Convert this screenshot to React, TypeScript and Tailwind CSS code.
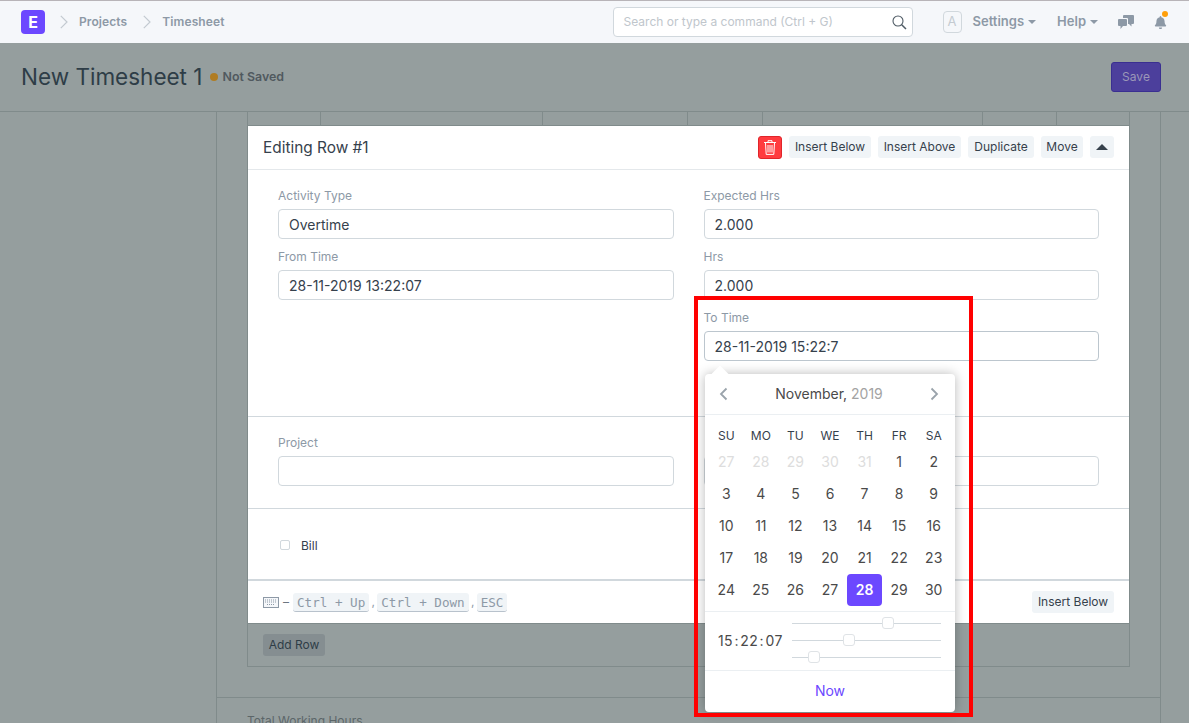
import { FaBell } from 'react-icons/fa';

const WEEK_DAYS = ['SU', 'MO', 'TU', 'WE', 'TH', 'FR', 'SA'];
const PREV_DAYS = [27, 28, 29, 30, 31];
const DAYS = Array.from({ length: 30 }, (_, i) => i + 1);

function Field({ label, value, focused }: { label?: string; value?: string; focused?: boolean }) {
  return (
    <div className="mb-[8px]">
      <div className="h-5 mb-[3px] text-xs leading-5 text-[#8d99a6]">{label}</div>
      <div className={`h-[30px] px-[10px] border rounded text-sm leading-[30px] text-[#36414c] bg-white ${focused ? 'border-[#bcc6ce]' : 'border-[#d1d8dd]'}`}>
        {value}
      </div>
    </div>
  );
}

function SmallBtn({ children, className = '' }: { children: React.ReactNode; className?: string }) {
  return (
    <div className={`h-[22px] flex items-center justify-center rounded-[3px] bg-[#f0f4f7] text-xs text-[#36414c] ${className}`}>
      {children}
    </div>
  );
}

function Crumb({ label }: { label: string }) {
  return (
    <div className="flex items-center gap-[11px]">
      <svg width="8" height="14" viewBox="0 0 8 14" fill="none" stroke="#c3cad1" strokeWidth="1.2">
        <path d="M0.8 0.8 L7 7 L0.8 13.2" />
      </svg>
      <span className="text-xs tracking-[0.1px] font-semibold text-[#8d99a6]">{label}</span>
    </div>
  );
}

function Caret({ color = '#8d99a6' }: { color?: string }) {
  return (
    <svg width="8" height="4" viewBox="0 0 8 4">
      <path d="M0 0 H8 L4 4 Z" fill={color} />
    </svg>
  );
}

function Kbd({ children }: { children: React.ReactNode }) {
  return (
    <span className="px-1 h-[19px] leading-[19px] rounded-[3px] bg-[#f0f4f7] border-b border-[#b8c2cc] text-[#8d99a6] text-[12.6px] font-['DejaVu_Sans_Mono',monospace]">
      {children}
    </span>
  );
}

function TimeSlider({ left }: { left: string }) {
  return (
    <div className="relative h-[17px] flex items-center">
      <div className="w-full h-px bg-[#d1d8dd]" />
      <div className={`absolute ${left} top-[2px] w-3 h-3 rounded-[3px] bg-white border border-[#dfe3e6]`} />
    </div>
  );
}

function DatePicker() {
  return (
    <div className="absolute left-[705px] top-[374px] w-[250px] h-[338px] bg-white rounded shadow-[0_0_12px_rgba(0,0,0,0.28)] flex flex-col">
      <div className="absolute -top-[6px] left-[9px] w-3 h-3 rotate-45 bg-white" />
      <div className="relative h-[41px] flex items-center justify-between pl-[14px] pr-[16px] border-b border-[#ebeff2]">
        <svg width="9" height="14" viewBox="0 0 9 14" fill="none" stroke="#9aa3ab" strokeWidth="1.8">
          <path d="M7.5 1.5 L2 7 L7.5 12.5" />
        </svg>
        <div className="text-sm text-[#4a4a4a]">
          November, <span className="text-[#a3a3a3]">2019</span>
        </div>
        <svg width="9" height="14" viewBox="0 0 9 14" fill="none" stroke="#9aa3ab" strokeWidth="1.8">
          <path d="M1.5 1.5 L7 7 L1.5 12.5" />
        </svg>
      </div>
      <div className="grid grid-cols-7 px-1 pt-[11px] text-center">
        {WEEK_DAYS.map((d) => (
          <div key={d} className="h-[18px] leading-[19px] text-xs text-[#36414c]">
            {d}
          </div>
        ))}
      </div>
      <div className="grid grid-cols-7 auto-rows-[32px] px-1 pt-[2px] text-center text-sm text-[#4a4a4a] leading-[32px]">
        {PREV_DAYS.map((d) => (
          <div key={`p${d}`} className="text-[#dddddd]">
            {d}
          </div>
        ))}
        {DAYS.map((d) =>
          d === 28 ? (
            <div key={d} className="rounded bg-[#6c48ff] text-white font-semibold">
              {d}
            </div>
          ) : (
            <div key={d}>{d}</div>
          )
        )}
      </div>
      <div className="mt-[5px] h-[60px] flex items-center border-y border-[#ebeff2] pl-[13px] pr-[14px]">
        <div className="w-[74px] text-sm tracking-[0.35px] text-[#4a4a4a]">
          15<span className="mx-[1.5px]">:</span>22<span className="mx-[1.5px]">:</span>07
        </div>
        <div className="flex-1 flex flex-col mb-[1px]">
          <TimeSlider left="left-[90px]" />
          <TimeSlider left="left-[51px]" />
          <TimeSlider left="left-[16px]" />
        </div>
      </div>
      <div className="flex-1 flex items-center justify-center text-sm text-[#6c48ff] pb-[1px]">Now</div>
    </div>
  );
}

export default function App() {
  return (
    <div className="relative h-[723px] overflow-hidden bg-[#959e9e] font-['Inter',sans-serif]">
      {/* navbar */}
      <div className="h-[43px] border-t border-[#b8b4b8] bg-[#f5f7fa] flex items-center pl-[21px] pr-[22px]">
        <div className="w-6 h-6 rounded bg-[#6c48ff] flex items-center justify-center text-white text-base font-bold">E</div>
        <div className="ml-[15px] flex items-center gap-4">
          <Crumb label="Projects" />
          <Crumb label="Timesheet" />
        </div>
        <div className="ml-auto w-[300px] h-[30px] pl-[10px] pr-[5px] flex items-center justify-between bg-white border border-[#d1d8dd] rounded text-xs text-[#c0c6cc]">
          <span>Search or type a command (Ctrl + G)</span>
          <svg width="15" height="15" viewBox="0 0 15 15" fill="none" stroke="#4f5b65" strokeWidth="1.1">
            <circle cx="6" cy="6" r="5" />
            <path d="M9.7 9.7 L14 14" strokeWidth="1.5" />
          </svg>
        </div>
        <div className="ml-[30px] w-[19px] h-[22px] rounded border border-[#d1d8dd] flex items-center justify-center text-[13px] text-[#c4cbd1]">A</div>
        <div className="ml-[11px] flex items-center gap-1 text-[13px] font-semibold text-[#8d99a6]">
          Settings <Caret />
        </div>
        <div className="ml-[21px] flex items-center gap-1 text-[13px] font-semibold text-[#8d99a6]">
          Help <Caret />
        </div>
        <svg className="ml-5" width="16" height="15" viewBox="0 0 16 15" fill="#8d99a6">
          <path d="M5 1 a1 1 0 0 1 1 -1 H15 a1 1 0 0 1 1 1 V8 a1 1 0 0 1 -1 1 H13.5 V11.5 L11 9 H10 V4 a1 1 0 0 0 -1 -1 H5 Z" />
          <path d="M1 4 H8 a1 1 0 0 1 1 1 V10 a1 1 0 0 1 -1 1 H5 L2.5 14 V11 H1 a1 1 0 0 1 -1 -1 V5 a1 1 0 0 1 1 -1 Z" />
        </svg>
        <div className="relative ml-5">
          <FaBell className="text-[#8d99a6] text-[13px]" />
          <div className="absolute -top-[5px] left-[8px] w-[6px] h-[6px] rounded-full bg-[#ff9f0a]" />
        </div>
      </div>

      {/* page head */}
      <div className="h-[69px] border-b border-[#808b8b] flex items-center pl-[21px] pr-[28px]">
        <h1 className="text-[22.5px] text-[#2e3d47] font-normal">New Timesheet 1</h1>
        <div className="ml-2 w-2 h-2 rounded-full bg-[#b07c22]" />
        <span className="ml-1 text-[12.4px] font-semibold text-[#50595f]">Not Saved</span>
        <div className="ml-auto w-[50px] h-[30px] flex items-center justify-center rounded-[3px] bg-[#4c3f9c] border border-[#3a2f91] text-xs text-[#9b97b8]">
          Save
        </div>
      </div>

      {/* form column */}
      <div className="ml-[216px] w-[945px] h-[611px] border-x border-[#808b8b] pl-[30px] pr-[30px]">
        <div className="border-x border-[#808b8b]">
          <div className="h-[14px] flex border-b border-[#808b8b]">
            <div className="w-[73px] border-r border-[#808b8b]" />
            <div className="w-[222px] border-r border-[#808b8b]" />
            <div className="w-[145px] border-r border-[#808b8b]" />
            <div className="w-[75px] border-r border-[#808b8b]" />
            <div className="w-[220px] border-r border-[#808b8b]" />
            <div className="w-[74px] border-r border-[#808b8b]" />
          </div>

          <div className="bg-white h-[497px] flex flex-col">
            <div className="h-[44px] flex items-center justify-between pl-[15px] pr-[15px] pb-[1px] border-b border-[#e4e8eb]">
              <span className="mt-[1px] text-[15.4px] text-[#36414c]">Editing Row #1</span>
              <div className="flex items-center gap-[7px]">
                <div className="w-6 h-[23px] rounded-[3px] bg-[#ff3b3f] border border-[#e0252a] flex items-center justify-center">
                  <svg width="12" height="15" viewBox="0 0 12 15" fill="none" stroke="#ffffff" strokeWidth="1">
                    <path d="M0 2.5 H12 M4 2 V0.7 H8 V2 M1.5 3 L2.2 14.4 H9.8 L10.5 3 M4 5 V12.5 M6 5 V12.5 M8 5 V12.5" />
                  </svg>
                </div>
                <SmallBtn className="w-[82px]">Insert Below</SmallBtn>
                <SmallBtn className="w-[83px]">Insert Above</SmallBtn>
                <SmallBtn className="w-[66px]">Duplicate</SmallBtn>
                <SmallBtn className="w-[42px]">Move</SmallBtn>
                <SmallBtn className="w-6">
                  <svg width="12" height="6" viewBox="0 0 12 6">
                    <path d="M6 0 L12 6 H0 Z" fill="#36414c" />
                  </svg>
                </SmallBtn>
              </div>
            </div>

            <div className="h-[247px] grid grid-cols-2 gap-x-[30px] content-start px-[30px] pt-[16px] border-b border-[#d1d8dd]">
              <div>
                <Field label="Activity Type" value="Overtime" />
                <Field label="From Time" value="28-11-2019 13:22:07" />
              </div>
              <div>
                <Field label="Expected Hrs" value="2.000" />
                <Field label="Hrs" value="2.000" />
                <Field label="To Time" value="28-11-2019 15:22:7" focused />
              </div>
            </div>

            <div className="h-[92px] grid grid-cols-2 gap-x-[30px] px-[30px] pt-[16px] border-b border-[#d1d8dd]">
              <Field label="Project" />
              <Field />
            </div>

            <div className="h-[72px] px-[32px] pt-[30px] flex items-start gap-[11px] text-xs leading-none text-[#36414c] border-b-2 border-[#d1d8dd]">
              <div className="mt-[1px] w-[10px] h-[10px] rounded-[2px] border border-[#d1d8dd]" />
              <span className="mt-[1px]">Bill</span>
            </div>

            <div className="flex-1 flex items-center justify-between px-[15px] text-xs text-[#8d99a6]">
              <div className="flex items-center">
                <svg width="16" height="11" viewBox="0 0 16 11" fill="none" stroke="#8d99a6">
                  <rect x="0.5" y="0.5" width="15" height="10" fill="#f5f7fa" />
                  <path d="M2 3 H14 M2 5 H14 M4 7.5 H12" strokeDasharray="1 1" />
                </svg>
                <span className="mx-1 text-[#6c7680]">–</span>
                <Kbd>Ctrl + Up</Kbd>
                <span className="w-2 text-center">,</span>
                <Kbd>Ctrl + Down</Kbd>
                <span className="w-2 text-center">,</span>
                <Kbd>ESC</Kbd>
              </div>
              <SmallBtn className="w-[82px]">Insert Below</SmallBtn>
            </div>
          </div>

          <div className="h-[44px] border-y border-[#808b8b] pl-[15px] pt-[10px] mb-[30px]">
            <div className="w-[62px] h-[22px] flex items-center justify-center rounded-[3px] bg-[#858e91] text-xs text-[#2e3d47]">
              Add Row
            </div>
          </div>
        </div>

        <div className="-mx-[30px] border-t border-[#808b8b] pl-[30px] pt-[15px] text-xs text-[#5c6669]">Total Working Hours</div>
      </div>

      {/* picker and highlight lie over the form */}
      <DatePicker />
      <div className="absolute left-[694px] top-[296px] w-[279px] h-[421px] border-4 border-[#ff0000]" />
    </div>
  );
}
